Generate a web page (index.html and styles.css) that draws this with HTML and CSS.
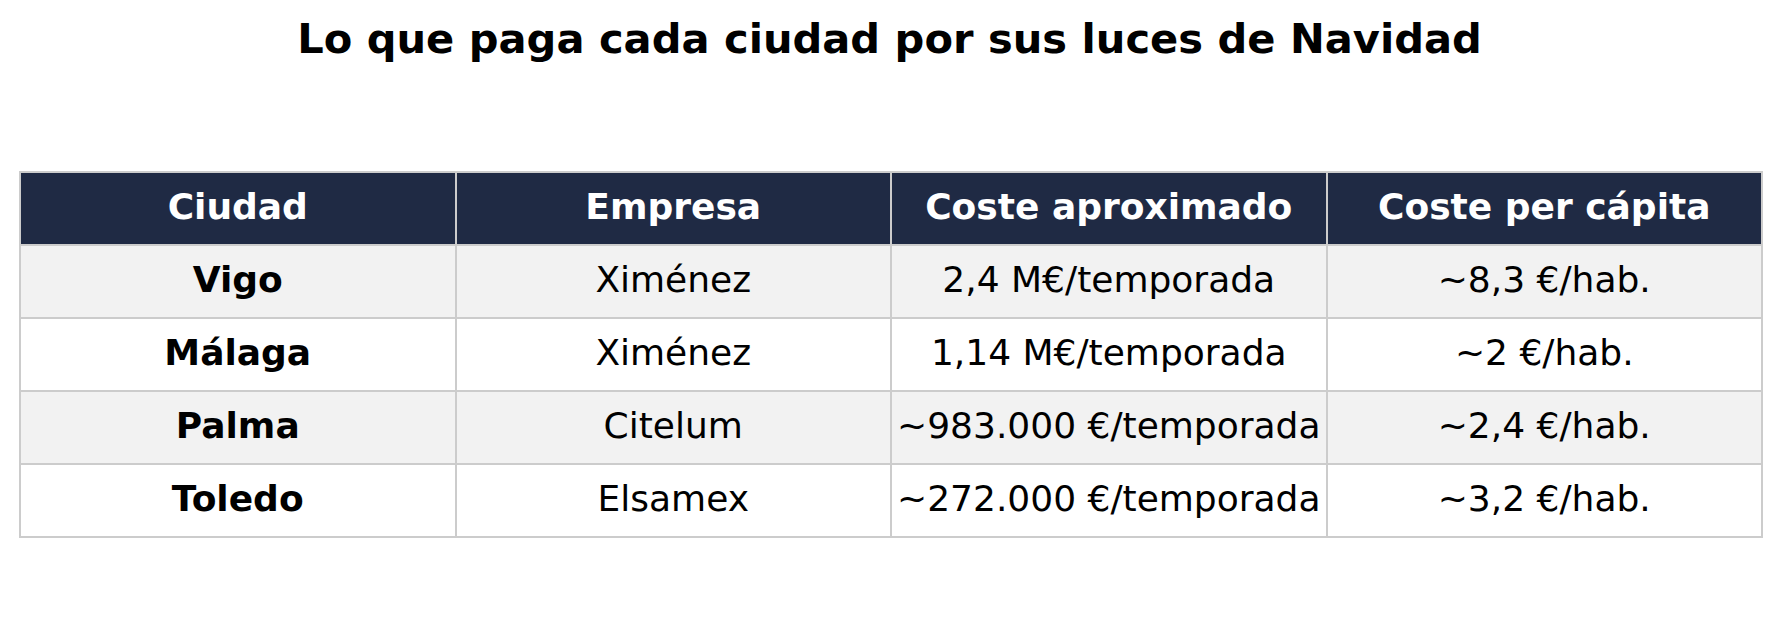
FILE: index.html
```html
<!DOCTYPE html>
<html lang="es">
<head>
<meta charset="utf-8">
<title>Luces de Navidad</title>
<link rel="stylesheet" href="styles.css">
</head>
<body>
<div class="page">
  <h1 class="title">Lo que paga cada ciudad por sus luces de Navidad</h1>
  <div class="table">
    <div class="cell head">Ciudad</div>
    <div class="cell head">Empresa</div>
    <div class="cell head">Coste aproximado</div>
    <div class="cell head">Coste per cápita</div>

    <div class="cell alt city">Vigo</div>
    <div class="cell alt">Ximénez</div>
    <div class="cell alt">2,4 M€/temporada</div>
    <div class="cell alt">~8,3 €/hab.</div>

    <div class="cell city">Málaga</div>
    <div class="cell">Ximénez</div>
    <div class="cell">1,14 M€/temporada</div>
    <div class="cell">~2 €/hab.</div>

    <div class="cell alt city">Palma</div>
    <div class="cell alt">Citelum</div>
    <div class="cell alt">~983.000 €/temporada</div>
    <div class="cell alt">~2,4 €/hab.</div>

    <div class="cell city">Toledo</div>
    <div class="cell">Elsamex</div>
    <div class="cell">~272.000 €/temporada</div>
    <div class="cell">~3,2 €/hab.</div>
  </div>
</div>
</body>
</html>
```
FILE: styles.css
```css
html, body {
  margin: 0;
  padding: 0;
  background: #ffffff;
}
body {
  font-family: "DejaVu Sans", "Liberation Sans", sans-serif;
  color: #000;
}
.page {
  width: 1779px;
  height: 621px;
  display: flex;
  flex-direction: column;
  align-items: flex-start;
}
.title {
  align-self: stretch;
  margin: 14px 0 0 0;
  font-size: 41.6px;
  font-weight: bold;
  line-height: 49px;
  text-align: center;
}
.table {
  margin: 108px 0 0 19px;
  display: grid;
  grid-template-columns: repeat(4, 433.5px);
  grid-auto-rows: 71px;
  gap: 2px;
  padding: 2px;
  background: #cccccc;
}
.cell {
  display: flex;
  align-items: center;
  justify-content: center;
  background: #ffffff;
  font-size: 36px;
  white-space: nowrap;
  padding-bottom: 4px;
  box-sizing: border-box;
}
.cell.alt {
  background: #f2f2f2;
}
.cell.head {
  background: #1f2a44;
  color: #ffffff;
  font-weight: bold;
}
.cell.city {
  font-weight: bold;
}
```
